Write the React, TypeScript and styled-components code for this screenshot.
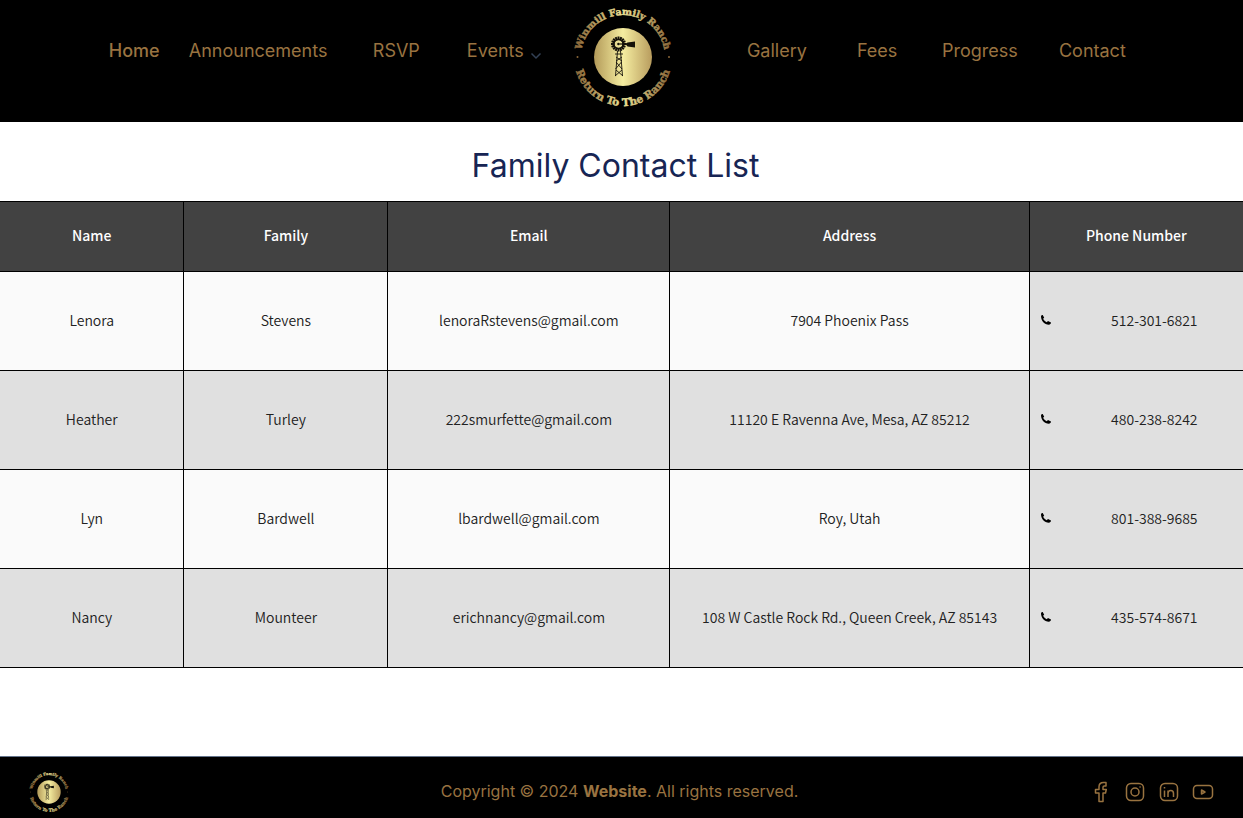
import React from "react";
import styled, { createGlobalStyle } from "styled-components";

const gold = "#997340";

const GlobalStyle = createGlobalStyle`
  *, *::before, *::after { box-sizing: border-box; }
  body {
    margin: 0;
    background: #fff;
    font-family: Inter, "Liberation Sans", sans-serif;
  }
`;

const Page = styled.div`
  display: flex;
  flex-direction: column;
  min-height: 100vh;
`;

const Header = styled.header`
  background: #000;
`;

const Nav = styled.nav`
  display: grid;
  grid-template-columns: 80fr 184fr 94fr 104fr 176fr 110fr 85fr 117fr 184fr;
  padding: 5px 0 13px 8.75%;
  align-items: start;
`;

const NavLink = styled.a<{ $strong?: boolean }>`
  padding-top: 35px;
  color: ${gold};
  font-size: 18px;
  line-height: 22px;
  font-weight: ${(p) => (p.$strong ? 500 : 400)};
  text-decoration: none;
  white-space: nowrap;
`;

const Chevron = styled.svg`
  width: 12px;
  height: 8px;
  margin-left: 6px;
  vertical-align: -3px;
`;

const LogoSvg = styled.svg<{ $size: number }>`
  display: block;
  width: ${(p) => p.$size}px;
  height: ${(p) => p.$size}px;
`;

const Main = styled.main`
  flex: 1;
`;

const Title = styled.h1`
  margin: 0;
  padding: 24px 12px 15px 0;
  color: #172554;
  font-size: 32px;
  line-height: 40px;
  font-weight: 400;
  text-align: center;
`;

const Table = styled.table`
  width: 100%;
  table-layout: fixed;
  border-collapse: collapse;
  font-family: "Noto Sans CJK SC", "Noto Sans", sans-serif;
  font-size: 14px;
  line-height: 20px;
  text-align: center;
`;

const Col = styled.col<{ $width?: string }>`
  width: ${(p) => p.$width ?? "auto"};
`;

const HeadCell = styled.th`
  height: 70px;
  padding: 0 10px 3px;
  border: 1px solid #000;
  background: #424242;
  color: #fff;
  font-weight: 500;
  &:first-child { border-left: 0; }
  &:last-child { border-right: 0; }
`;

const Cell = styled.td`
  height: 99px;
  padding: 0 10px 3px;
  border: 1px solid #000;
  color: #212121;
  font-weight: 350;
  &:first-child { border-left: 0; }
  &:last-child { border-right: 0; }
`;

const Row = styled.tr`
  background: #fafafa;
  &:nth-child(even) { background: #e0e0e0; }
`;

const PhoneCell = styled(Cell)`
  padding-right: 0;
  background: #e0e0e0;
`;

const Phone = styled.div`
  display: flex;
  align-items: center;
  gap: 14px;
`;

const PhoneIcon = styled.svg`
  width: 12px;
  height: 12px;
`;

const PhoneNumber = styled.span`
  flex: 1;
`;

const Footer = styled.footer`
  display: grid;
  grid-template-columns: 1fr auto 1fr;
  align-items: center;
  padding: 14px 28px 5px;
  border-top: 1px solid #64748b;
  background: #000;
  color: ${gold};
`;

const Copyright = styled.p`
  margin: 0;
  padding: 0 4px 2px 0;
  font-size: 16px;
  line-height: 24px;
`;

const Socials = styled.div`
  display: flex;
  justify-content: flex-end;
  gap: 10px;
`;

const SocialLink = styled.a`
  display: block;
  width: 24px;
  height: 24px;
  color: ${gold};
`;

function Logo({ id, size }: { id: string; size: number }) {
  const blades = Array.from({ length: 16 }, (_, i) => i * 22.5);
  return (
    <LogoSvg $size={size} viewBox="0 0 104 104" role="img" aria-label="Winmill Family Ranch">
      <defs>
        <linearGradient id={`${id}-disc`} x1="0" x2="1">
          <stop offset="0" stopColor="#b39a59" />
          <stop offset="0.5" stopColor="#f5eda0" />
          <stop offset="1" stopColor="#b89c5e" />
        </linearGradient>
        <linearGradient id={`${id}-text`} gradientUnits="userSpaceOnUse" x1="4" x2="100" y1="0" y2="0">
          <stop offset="0" stopColor="#8a6638" />
          <stop offset="0.5" stopColor="#f0e596" />
          <stop offset="1" stopColor="#8a6638" />
        </linearGradient>
        <path id={`${id}-top`} d="M10 52A42 42 0 0 1 94 52" />
        <path id={`${id}-bottom`} d="M3 52A49 49 0 0 0 101 52" />
      </defs>
      <circle cx="52" cy="52" r="29" fill={`url(#${id}-disc)`} />
      <g
        fill={`url(#${id}-text)`}
        stroke={`url(#${id}-text)`}
        strokeWidth="0.5"
        fontFamily='"DejaVu Serif", serif'
        fontWeight="700"
        textAnchor="middle"
      >
        <text fontSize="9.500">
          <textPath href={`#${id}-top`} startOffset="50%">Winmill Family Ranch</textPath>
        </text>
        <text fontSize="10.500">
          <textPath href={`#${id}-bottom`} startOffset="50%">Return To The Ranch</textPath>
        </text>
      </g>
      <circle cx="6.500" cy="52" r="1" fill="#8a6638" />
      <circle cx="98" cy="52" r="1" fill="#8a6638" />
      <g stroke="#15120a" fill="none">
        {blades.map((a) => (
          <path key={a} d="M47.500 35v-3.500" strokeWidth="2" transform={`rotate(${a} 47.500 39)`} />
        ))}
        <circle cx="47.500" cy="39" r="4.500" strokeWidth="1.300" />
        <path d="M49 39h9" strokeWidth="1.200" />
        <path d="M54.500 39l2-1.500 7.500-1v6l-7.500-1z" fill="#15120a" stroke="none" />
        <path d="M46.500 46l-2 25M49.500 46l2 25M44 49h8M45 56l6-4M45 52l6 4M44.500 64l6-7M45 57l6 7M44 71l7-6M45 65l7 6" strokeWidth="0.900" />
      </g>
      <circle cx="47.500" cy="39" r="1.300" fill="#15120a" />
    </LogoSvg>
  );
}

const contacts = [
  ["Lenora", "Stevens", "lenoraRstevens@gmail.com", "7904 Phoenix Pass", "512-301-6821"],
  ["Heather", "Turley", "222smurfette@gmail.com", "11120 E Ravenna Ave, Mesa, AZ 85212", "480-238-8242"],
  ["Lyn", "Bardwell", "lbardwell@gmail.com", "Roy, Utah", "801-388-9685"],
  ["Nancy", "Mounteer", "erichnancy@gmail.com", "108 W Castle Rock Rd., Queen Creek, AZ 85143", "435-574-8671"],
];

const socials = [
  {
    name: "Facebook",
    art: <path d="M17 2.500h-2.500c-3 0-4.500 1.800-4.500 4.300V9.500H6.500V13H10v8.500h4V13h2.500l.8-3.500H14V7.300c0-.8.4-1.300 1.300-1.300H17z" />,
  },
  {
    name: "Instagram",
    art: (
      <>
        <rect x="3.500" y="3.500" width="17" height="17" rx="4.500" />
        <circle cx="12" cy="12" r="4" />
        <path d="M17 7h.1" strokeLinecap="round" />
      </>
    ),
  },
  {
    name: "LinkedIn",
    art: (
      <>
        <rect x="3.500" y="3.500" width="17" height="17" rx="4.500" />
        <path d="M7.500 10.500v6.500M7.500 7v1.500M11 17v-6.500M11 13.500c0-4 5.500-4 5.500 0V17" />
      </>
    ),
  },
  {
    name: "YouTube",
    art: (
      <>
        <rect x="2.500" y="5.500" width="19" height="13" rx="3.500" />
        <path d="M10.500 10v4l3.500-2z" />
      </>
    ),
  },
];

export default function App() {
  return (
    <Page>
      <GlobalStyle />
      <Header>
        <Nav>
          <NavLink href="#home" $strong>Home</NavLink>
          <NavLink href="#announcements">Announcements</NavLink>
          <NavLink href="#rsvp">RSVP</NavLink>
          <NavLink href="#events">
            Events
            <Chevron viewBox="0 0 12 8" fill="none" stroke="#334155" strokeWidth="1.500" aria-hidden="true">
              <path d="M1.500 1.500L6 6l4.500-4.500" />
            </Chevron>
          </NavLink>
          <Logo id="header-logo" size={104} />
          <NavLink href="#gallery">Gallery</NavLink>
          <NavLink href="#fees">Fees</NavLink>
          <NavLink href="#progress">Progress</NavLink>
          <NavLink href="#contact">Contact</NavLink>
        </Nav>
      </Header>
      <Main>
        <Title>Family Contact List</Title>
        <Table>
          <colgroup>
            <Col $width="14.8%" />
            <Col $width="16.4%" />
            <Col $width="22.7%" />
            <Col $width="28.9%" />
            <Col />
          </colgroup>
          <thead>
            <tr>
              {["Name", "Family", "Email", "Address", "Phone Number"].map((h) => (
                <HeadCell key={h} scope="col">{h}</HeadCell>
              ))}
            </tr>
          </thead>
          <tbody>
            {contacts.map(([name, family, email, address, phone]) => (
              <Row key={email}>
                <Cell>{name}</Cell>
                <Cell>{family}</Cell>
                <Cell>{email}</Cell>
                <Cell>{address}</Cell>
                <PhoneCell>
                  <Phone>
                    <PhoneIcon viewBox="0 0 12 12" aria-hidden="true">
                      <path d="M1 2.200C1.200 1.400 2 1 2.700 1l1.500 2.700-1.100 1.100c.7 1.500 2 2.800 3.600 3.500l1.300-1.200L11 8.600c-.1 1.300-.9 2.200-2.200 2.200C4.500 10.500 1 6.800 1 2.200z" fill="#000" />
                    </PhoneIcon>
                    <PhoneNumber>{phone}</PhoneNumber>
                  </Phone>
                </PhoneCell>
              </Row>
            ))}
          </tbody>
        </Table>
      </Main>
      <Footer>
        <Logo id="footer-logo" size={42} />
        <Copyright>
          Copyright © 2024 <strong>Website</strong>. All rights reserved.
        </Copyright>
        <Socials>
          {socials.map((s) => (
            <SocialLink key={s.name} href={`#${s.name.toLowerCase()}`} aria-label={s.name}>
              <svg width="24" height="24" viewBox="0 0 24 24" fill="none" stroke="currentColor" strokeWidth="1.500" strokeLinejoin="round">
                {s.art}
              </svg>
            </SocialLink>
          ))}
        </Socials>
      </Footer>
    </Page>
  );
}
